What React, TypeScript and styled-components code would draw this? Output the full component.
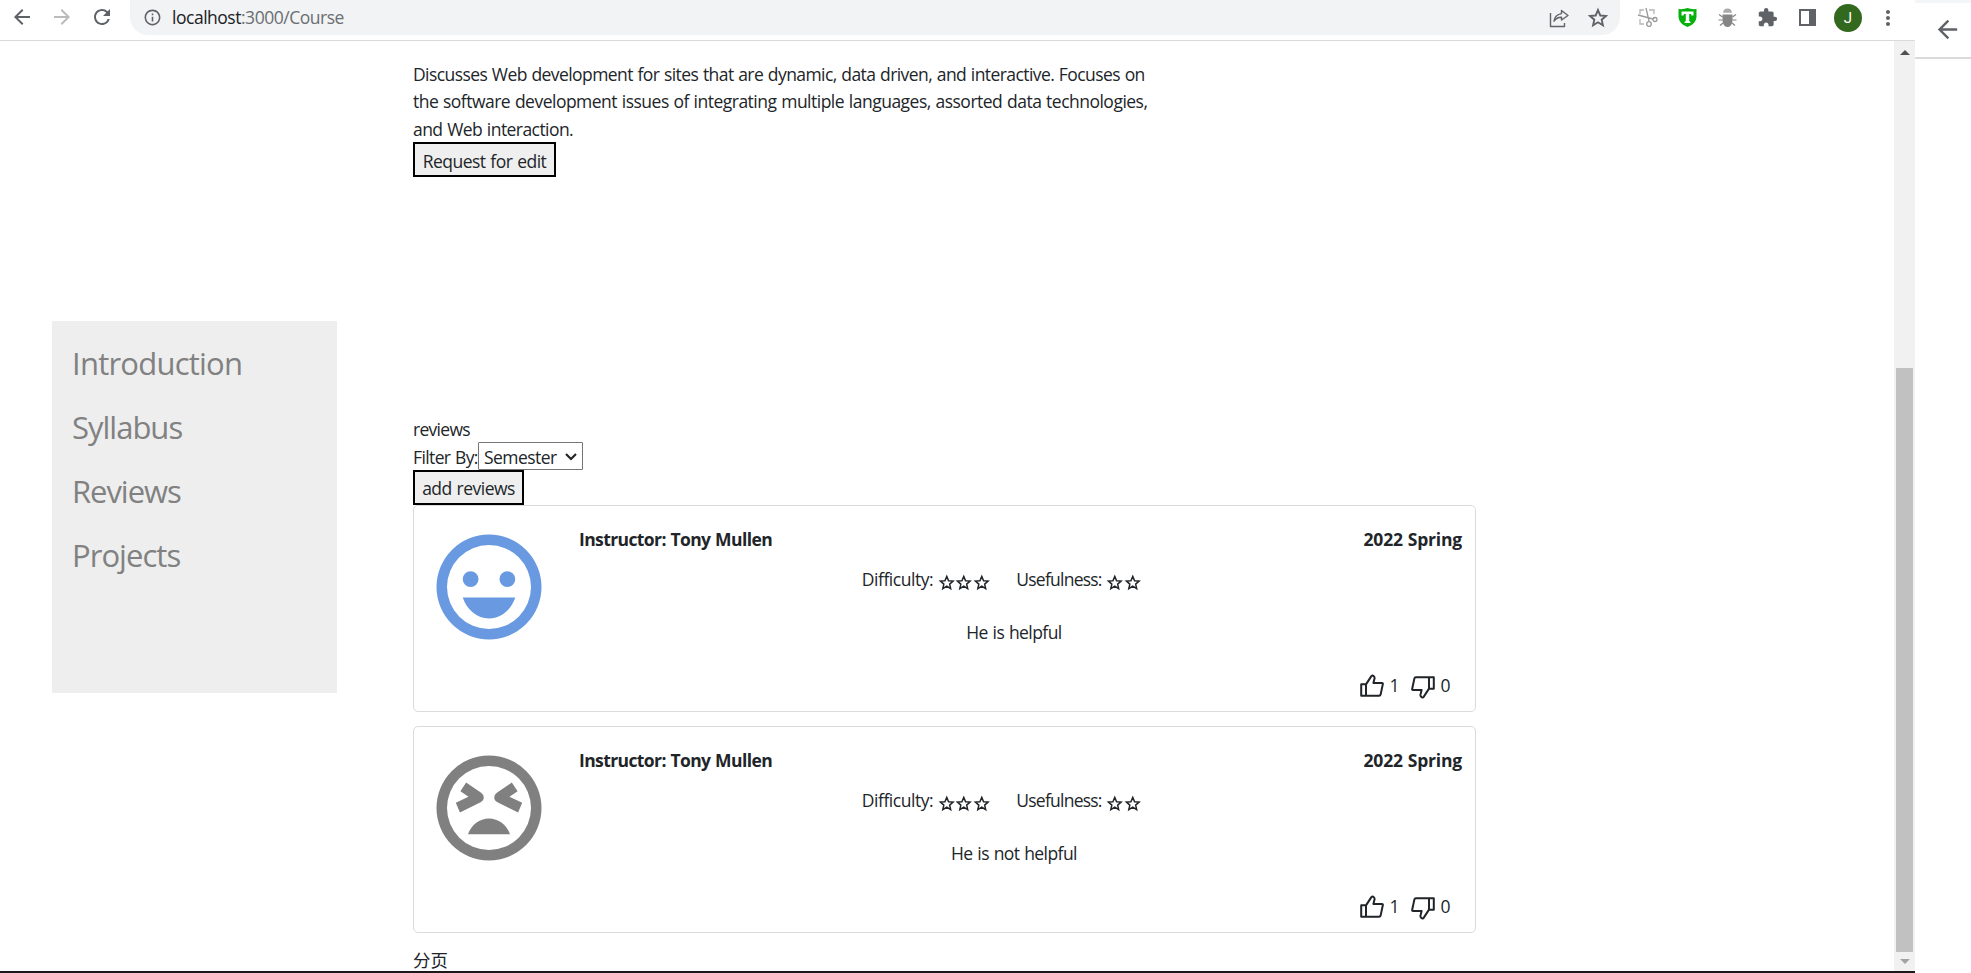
import React from "react";
import styled, { createGlobalStyle } from "styled-components";
import { MdExtension, MdArrowBack, MdArrowForward, MdRefresh, MdInfoOutline, MdMoreVert } from "react-icons/md";

const GlobalStyle = createGlobalStyle`
  * { box-sizing: border-box; }
  body { margin: 0; background: #fff; overflow: hidden; }
`;

const Desktop = styled.div`
  display: flex;
  width: 1971px;
  height: 973px;
  font-family: "Open Sans", "Noto Sans", "Noto Sans CJK SC", sans-serif;
  font-size: 17.5px;
  line-height: 29.4px;
  letter-spacing: -0.56px;
  word-spacing: 0.7px;
  color: #212529;
`;
const Browser = styled.div`
  width: 1915px;
  display: flex;
  flex-direction: column;
  border-bottom: 2px solid #1b191a;
`;
const Toolbar = styled.header`
  height: 41px;
  flex: none;
  display: flex;
  align-items: flex-start;
  border-bottom: 1px solid #d9dadc;
  color: #5f6368;
`;
const NavButtons = styled.div`
  display: flex;
  width: 130px;
  padding: 5px 0 0 10.3px;
  gap: 16px;
  svg { width: 24px; height: 24px; flex: none; }
`;
const AddressBar = styled.div`
  flex: none;
  width: 1490px;
  height: 35px;
  display: flex;
  align-items: center;
  padding: 0 11.5px 0 13px;
  background: #f1f3f4;
  border-radius: 0 0 18px 18px;
`;
const Url = styled.span`
  flex: 1;
  margin-left: 10px;
  font-size: 17.5px;
  letter-spacing: -0.48px;
  color: #6b6e72;
  b { font-weight: 400; color: #202124; }
`;
const BarIcons = styled.div`
  display: flex;
  align-items: center;
  gap: 18px;
`;
const Extensions = styled.div`
  display: flex;
  align-items: center;
  height: 35px;
  padding-left: 17px;
  gap: 19px;
  svg { flex: none; }
`;
const Avatar = styled.div`
  width: 28px;
  height: 28px;
  margin: 0 -5.5px 0 -3px;
  border-radius: 50%;
  background: #33691e;
  color: #fff;
  font-family: Roboto, sans-serif;
  font-size: 15px;
  letter-spacing: 0;
  line-height: 28px;
  text-align: center;
`;
const Viewport = styled.div`
  flex: 1;
  min-height: 0;
  display: flex;
`;
const Page = styled.main`
  width: 1894px;
  display: flex;
  align-items: flex-start;
  padding-left: 52px;
`;
const Scrollbar = styled.div`
  width: 21px;
  display: flex;
  flex-direction: column;
  align-items: center;
  background: #f1f1f1;
  padding-top: 9px;
  svg { flex: none; }
`;
const Thumb = styled.div`
  flex: none;
  width: 17px;
  height: 584px;
  margin: 313px 0 7px;
  background: #c1c1c1;
`;
const SideWindow = styled.aside`
  width: 56px;
  height: 59px;
  border-top: 3px solid #f3f5f6;
  border-bottom: 2px solid #d9dadc;
  padding: 12px 0 0 18px;
  color: #5f6368;
`;
const Sidebar = styled.nav`
  width: 285px;
  height: 372px;
  margin-top: 280px;
  padding: 10px 20px;
  background: #eee;
`;
const SideLink = styled.a<{ $spacing: number }>`
  display: block;
  font-size: 31px;
  line-height: 64px;
  letter-spacing: ${(p) => p.$spacing}px;
  color: #818181;
`;
const Content = styled.section`
  width: 1063px;
  margin: 18.6px 0 0 76px;
`;
const Line = styled.div<{ $spacing?: number }>`
  height: 27.5px;
  white-space: pre;
  letter-spacing: ${(p) => p.$spacing ?? -0.56}px;
`;
const OutlinedButton = styled.button<{ $width: number }>`
  display: block;
  width: ${(p) => p.$width}px;
  height: 35px;
  padding: 3px 0 0;
  border: 2px solid #000;
  background: #efefef;
  font: inherit;
  line-height: 27px;
  letter-spacing: -0.5px;
  word-spacing: 0.7px;
  color: #212529;
  white-space: nowrap;
`;
const Reviews = styled.div`
  margin-top: 237.6px;
`;
const FilterRow = styled.div`
  display: flex;
  height: 27.5px;
`;
const FilterLabel = styled.span`
  width: 65px;
  padding-top: 0.6px;
  letter-spacing: -0.62px;
  white-space: nowrap;
`;
const SelectBox = styled.div`
  width: 105px;
  height: 28px;
  display: flex;
  align-items: center;
  justify-content: space-between;
  padding: 2px 5px 0;
  border: 1px solid #767676;
  border-radius: 1px;
  line-height: 24px;
  svg { margin-top: -1px; }
`;
const Card = styled.article`
  display: flex;
  height: 207.8px;
  margin-bottom: 13.2px;
  padding: 18.8px 13px 12px 12px;
  border: 1px solid #dbdbdb;
  border-radius: 5px;
  & + & { height: 207px; }
`;
const Face = styled.svg`
  width: 126px;
  height: 126px;
  flex: none;
`;
const CardBody = styled.div`
  flex: 1;
  padding-left: 27px;
`;
const CardHead = styled.div`
  display: flex;
  justify-content: space-between;
  height: 41px;
  padding-top: 0.8px;
  font-weight: 700;
`;
const HeadText = styled.span<{ $spacing: number }>`
  letter-spacing: ${(p) => p.$spacing}px;
`;
const Ratings = styled.div`
  display: flex;
  justify-content: center;
  gap: 26px;
  height: 53px;
  margin-left: -8px;
  padding-right: 30px;
`;
const Rating = styled.div<{ $spacing: number }>`
  display: flex;
  letter-spacing: ${(p) => p.$spacing}px;
`;
const Stars = styled.span`
  display: flex;
  margin: 8.2px 0 0 4.5px;
`;
const Comment = styled.div`
  height: 52.6px;
  margin-left: -13px;
  text-align: center;
`;
const Votes = styled.div`
  display: flex;
  justify-content: flex-end;
  gap: 12px;
  padding-right: 12px;
`;
const Vote = styled.div`
  display: flex;
  gap: 5.5px;
`;
const VoteIcon = styled.svg<{ $down?: boolean }>`
  width: 24px;
  height: 24px;
  margin-top: ${(p) => (p.$down ? 4 : 2.5)}px;
  transform: ${(p) => (p.$down ? "rotate(180deg)" : "none")};
`;

const HandIcon = ({ down }: { down?: boolean }) => (
  <VoteIcon $down={down} viewBox="0 0 24 24" fill="none" stroke="#212529" strokeWidth="2" strokeLinejoin="round">
    <path d="M1.2 10.2H6V21.8H1.2zM6 10.4 11.2 2.4Q12.3.8 13.6 2 15 3.2 14.4 5L13.4 9H22Q23.1 9 22.8 10.3L20.6 20.6Q20.3 21.8 19.2 21.8H6" />
  </VoteIcon>
);

const StarIcon = ({ size }: { size: number }) => (
  <svg width={size} height={size} viewBox="1.5 1.5 21 21" fill="none" stroke="currentColor" strokeWidth="1.8">
    <path d="M12 4.4 14.2 9.6 19.6 10 15.5 13.6 16.7 19 12 16.1 7.3 19 8.5 13.6 4.4 10 9.8 9.6z" />
  </svg>
);

const FaceIcon = ({ happy }: { happy: boolean }) => (
  <Face viewBox="0 0 24 24" fill={happy ? "#6899e1" : "#808080"}>
    <path fillRule="evenodd" d="M12 2a10 10 0 1 0 0 20 10 10 0 0 0 0-20zm0 18a8 8 0 1 1 0-16 8 8 0 0 1 0 16z" />
    {happy ? (
      <path d="M8.5 9a1.5 1.5 0 1 0 0 3 1.5 1.5 0 0 0 0-3zm7 0a1.5 1.5 0 1 0 0 3 1.5 1.5 0 0 0 0-3zM12 18c2.28 0 4.22-1.66 5-4H7c.78 2.34 2.72 4 5 4z" />
    ) : (
      <>
        <path d="M12 14c-1.8 0-3.35 1.2-4 3h8c-.65-1.8-2.2-3-4-3z" />
        <path d="M7.65 7.15 6.55 8.8 8.1 9.87 5.68 11 6.46 12.85 10.4 10.9Q11 10.6 11 10 11 9.45 10.5 9.1z" />
        <path d="M16.35 7.15 17.45 8.8 15.9 9.87 18.32 11 17.54 12.85 13.6 10.9Q13 10.6 13 10 13 9.45 13.5 9.1z" />
      </>
    )}
  </Face>
);

const StarRow = ({ count }: { count: number }) => (
  <Stars>
    {Array.from({ length: count }, (_, i) => (
      <StarIcon key={i} size={17.5} />
    ))}
  </Stars>
);

const links = [
  { label: "Introduction", spacing: -0.77 },
  { label: "Syllabus", spacing: -1 },
  { label: "Reviews", spacing: -1.05 },
  { label: "Projects", spacing: -0.95 },
];
const reviews = [
  { happy: true, text: "He is helpful" },
  { happy: false, text: "He is not helpful" },
];

export default function App() {
  return (
    <>
      <GlobalStyle />
      <Desktop>
        <Browser>
          <Toolbar>
            <NavButtons>
              <MdArrowBack />
              <MdArrowForward color="#b9bbbd" />
              <MdRefresh />
            </NavButtons>
            <AddressBar>
              <MdInfoOutline size={19} />
              <Url><b>localhost</b>:3000/Course</Url>
              <BarIcons>
                <svg width="20" height="20" viewBox="0 0 20 20" fill="none" stroke="#5f6368" strokeWidth="1.4" strokeLinejoin="round">
                  <path d="M1.5 5V18.5H15.5V15M12.5 2.5 19 7.5 12.5 12V9.2Q8 9 5 13.2 6 6.5 12.5 5.6z" />
                </svg>
                <StarIcon size={22} />
              </BarIcons>
            </AddressBar>
            <Extensions>
              <svg width="21" height="21" viewBox="0 0 21 21" fill="none" stroke="#9a9a9a" strokeWidth="1.3">
                <path d="M3 7V3H7M12 3H17V7M3 12V17H7M17 12V10" stroke="#b5b5b5" />
                <path d="M9 1 12 14M1 8 16 12" />
                <circle cx="12" cy="17" r="2.3" />
                <circle cx="18" cy="12.5" r="2" />
              </svg>
              <svg width="21" height="21" viewBox="0 0 21 21">
                <path d="M1.5 2Q7 2.5 10.5 1 14 2.5 19.5 2V10Q19 17 10.5 20 2 17 1.5 10z" fill="#06b10b" />
                <path d="M4.5 4.5H16.5V8.5H14.5L14 7H12.2V14L13.5 15V16H7.5V15L8.8 14V7H7L6.5 8.5H4.5z" fill="#fff" />
              </svg>
              <svg width="21" height="21" viewBox="0 0 21 21">
                <path d="M6 5.8Q6.5 1.5 10.5 1.5T15 5.8z" fill="#aaa" />
                <path d="M5.5 7.5H15.5V14Q14.5 20 10.5 20T5.5 14z" fill="#858585" />
                <path d="M5.5 10 2 7.5M5.5 13H1.5M6 16 3 18.5M15.5 10 19 7.5M15.5 13H19.5M15 16 18 18.5" stroke="#858585" strokeWidth="1.2" />
              </svg>
              <MdExtension size={21} />
              <svg width="21" height="21" viewBox="0 0 21 21">
                <path fillRule="evenodd" d="M2 2H19V19H2zM4 4V17H12V4z" fill="#5f6368" />
              </svg>
              <Avatar>J</Avatar>
              <MdMoreVert size={24} />
            </Extensions>
          </Toolbar>
          <Viewport>
            <Page>
              <Sidebar>
                {links.map((l) => (
                  <SideLink key={l.label} $spacing={l.spacing}>{l.label}</SideLink>
                ))}
              </Sidebar>
              <Content>
                <Line $spacing={-0.58}>Discusses Web development for sites that are dynamic, data driven, and interactive. Focuses on</Line>
                <Line $spacing={-0.51}>the software development issues of integrating multiple languages, assorted data technologies,</Line>
                <Line>and Web interaction.</Line>
                <OutlinedButton $width={143}>Request for edit</OutlinedButton>
                <Reviews>
                  <Line $spacing={-0.7}>reviews</Line>
                  <FilterRow>
                    <FilterLabel>Filter By:</FilterLabel>
                    <SelectBox>
                      Semester
                      <svg width="12" height="8" viewBox="0 0 12 8" fill="none" stroke="#212529" strokeWidth="2.2">
                        <path d="M1 1 6 6 11 1" />
                      </svg>
                    </SelectBox>
                  </FilterRow>
                  <OutlinedButton $width={111}>add reviews</OutlinedButton>
                  {reviews.map((r) => (
                    <Card key={r.text}>
                      <FaceIcon happy={r.happy} />
                      <CardBody>
                        <CardHead>
                          <HeadText $spacing={-0.6}>Instructor: Tony Mullen</HeadText>
                          <HeadText $spacing={-0.2}>2022 Spring</HeadText>
                        </CardHead>
                        <Ratings>
                          <Rating $spacing={-0.45}>Difficulty:<StarRow count={3} /></Rating>
                          <Rating $spacing={-0.76}>Usefulness:<StarRow count={2} /></Rating>
                        </Ratings>
                        <Comment>{r.text}</Comment>
                        <Votes>
                          <Vote><HandIcon />1</Vote>
                          <Vote><HandIcon down />0</Vote>
                        </Votes>
                      </CardBody>
                    </Card>
                  ))}
                  <Line $spacing={0}>分页</Line>
                </Reviews>
              </Content>
            </Page>
            <Scrollbar>
              <svg width="10" height="5" viewBox="0 0 10 5"><path d="M0 5 5 0 10 5z" fill="#505050" /></svg>
              <Thumb />
              <svg width="10" height="5" viewBox="0 0 10 5"><path d="M0 0 5 5 10 0z" fill="#a3a3a3" /></svg>
            </Scrollbar>
          </Viewport>
        </Browser>
        <SideWindow>
          <MdArrowBack size={29} />
        </SideWindow>
      </Desktop>
    </>
  );
}
